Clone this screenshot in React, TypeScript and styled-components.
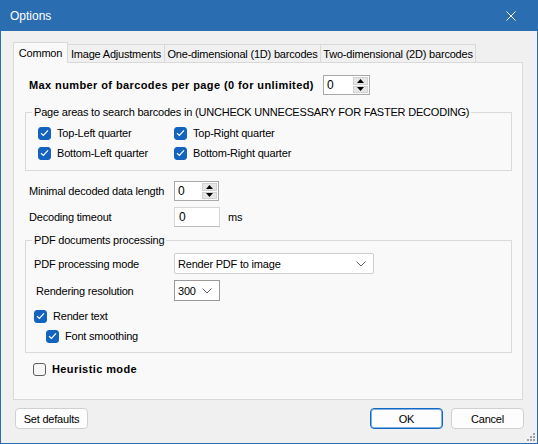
import React from "react"
import styled, { createGlobalStyle } from "styled-components"

const GlobalStyle = createGlobalStyle`
    html, body {
        margin: 0;
        padding: 0;
        background: #ffffff;
    }
    body {
        font-family: "Liberation Sans", Arial, sans-serif;
        font-size: 11px;
        letter-spacing: -0.2px;
        color: #000000;
    }
    * {
        box-sizing: border-box;
    }
`

const Check = () => (
    <svg width="9" height="8" viewBox="0 0 9 8">
        <path d="M1 4.2 L3.4 6.4 L8 1.4" fill="none" stroke="#ffffff" strokeWidth="1.2" />
    </svg>
)

const Chevron = () => (
    <svg width="10" height="6" viewBox="0 0 10 6">
        <path d="M0.5 0.5 L5 5 L9.5 0.5" fill="none" stroke="#606060" strokeWidth="1" />
    </svg>
)

const Arrow = ({ down }: { down?: boolean }) => (
    <svg width="7" height="4" viewBox="0 0 7 4">
        <path d={down ? "M0 0 L7 0 L3.5 4 Z" : "M0 4 L7 4 L3.5 0 Z"} fill="#000000" />
    </svg>
)

const Spin = ({ value, width }: { value: string; width: number }) => (
    <SpinBox style={{ width }}>
        <SpinText>{value}</SpinText>
        <SpinButtons>
            <SpinBtn><Arrow /></SpinBtn>
            <SpinBtn><Arrow down /></SpinBtn>
        </SpinButtons>
    </SpinBox>
)

const CheckBox = ({ label, checked, bold, indent }: { label: string; checked?: boolean; bold?: boolean; indent?: number }) => (
    <CheckRow $indent={indent ?? 0}>
        <Box $checked={!!checked}>{checked && <Check />}</Box>
        <CheckLabel $bold={!!bold}>{label}</CheckLabel>
    </CheckRow>
)

export default function App() {
    return (
        <>
            <GlobalStyle />
            <Window>
                <TitleBar>
                    <Title>Options</Title>
                    <CloseBtn>
                        <svg width="10" height="10" viewBox="0 0 10 10">
                            <path d="M0.5 0.5 L9.5 9.5 M9.5 0.5 L0.5 9.5" stroke="#ffffff" strokeWidth="1" />
                        </svg>
                    </CloseBtn>
                </TitleBar>
                <Body>
                    <Tabs>
                        <Tab $active $w={55}>Common</Tab>
                        <Tab $w={97}>Image Adjustments</Tab>
                        <Tab $w={156}>One-dimensional (1D) barcodes</Tab>
                        <Tab $w={155}>Two-dimensional (2D) barcodes</Tab>
                    </Tabs>
                    <Panel>
                        <FieldRow $top={12} $h={20} $pad={4}>
                            <FieldLabel $w={294} $bold>Max number of barcodes per page (0 for unlimited)</FieldLabel>
                            <Spin value="0" width={47} />
                        </FieldRow>

                        <Group $top={17}>
                            <Legend>Page areas to search barcodes in (UNCHECK UNNECESSARY FOR FASTER DECODING)</Legend>
                            <CheckGrid>
                                <CheckBox label="Top-Left quarter" checked />
                                <CheckBox label="Top-Right quarter" checked />
                                <CheckBox label="Bottom-Left quarter" checked />
                                <CheckBox label="Bottom-Right quarter" checked />
                            </CheckGrid>
                        </Group>

                        <FieldRow $top={10} $h={20} $pad={4}>
                            <FieldLabel $w={145}>Minimal decoded data length</FieldLabel>
                            <Spin value="0" width={45} />
                        </FieldRow>
                        <FieldRow $top={6} $h={20} $pad={4}>
                            <FieldLabel $w={145}>Decoding timeout</FieldLabel>
                            <TextBox>0</TextBox>
                            <Unit>ms</Unit>
                        </FieldRow>

                        <Group $top={13}>
                            <Legend>PDF documents processing</Legend>
                            <GroupBody>
                                <FieldRow $top={5} $h={21} $pad={8}>
                                    <FieldLabel $w={140}>PDF processing mode</FieldLabel>
                                    <Select $w={200} $dark={false}>
                                        <span>Render PDF to image</span>
                                        <Chevron />
                                    </Select>
                                </FieldRow>
                                <FieldRow $top={6} $h={21} $pad={10}>
                                    <FieldLabel $w={138}>Rendering resolution</FieldLabel>
                                    <Select $w={46} $dark>
                                        <span>300</span>
                                        <Chevron />
                                    </Select>
                                </FieldRow>
                                <CheckList>
                                    <CheckBox label="Render text" checked indent={8} />
                                    <CheckBox label="Font smoothing" checked indent={20} />
                                </CheckList>
                            </GroupBody>
                        </Group>

                        <HeuristicRow>
                            <CheckBox label="Heuristic mode" bold indent={8} />
                        </HeuristicRow>
                    </Panel>
                    <Footer>
                        <Button>Set defaults</Button>
                        <FooterRight>
                            <Button $primary>OK</Button>
                            <Button>Cancel</Button>
                        </FooterRight>
                    </Footer>
                </Body>
                <Grip>
                    <svg width="8" height="8" viewBox="0 0 8 8">
                        <rect x="6" y="0" width="2" height="2" fill="#a0a0a0" />
                        <rect x="3" y="3" width="2" height="2" fill="#a0a0a0" />
                        <rect x="6" y="3" width="2" height="2" fill="#a0a0a0" />
                        <rect x="0" y="6" width="2" height="2" fill="#a0a0a0" />
                        <rect x="3" y="6" width="2" height="2" fill="#a0a0a0" />
                        <rect x="6" y="6" width="2" height="2" fill="#a0a0a0" />
                    </svg>
                </Grip>
            </Window>
        </>
    )
}

const Window = styled.div`
    width: 538px;
    height: 444px;
    background: #2b6db1;
    padding: 0 1px 1px 1px;
    display: flex;
    flex-direction: column;
    position: relative;
`

const TitleBar = styled.div`
    height: 31px;
    flex: none;
    display: flex;
    align-items: center;
    justify-content: space-between;
    padding-left: 9px;
    color: #ffffff;
`

const Title = styled.div`
    font-size: 12px;
    letter-spacing: 0;
`

const CloseBtn = styled.div`
    width: 46px;
    height: 31px;
    display: flex;
    align-items: center;
    justify-content: center;
    padding-right: 6px;
`

const Body = styled.div`
    flex: 1;
    background: #f0f0f0;
    padding: 12px 14px 0 12px;
    display: flex;
    flex-direction: column;
`

const Tabs = styled.div`
    display: flex;
    align-items: flex-end;
    height: 20px;
    position: relative;
    z-index: 1;
    margin-bottom: -1px;
`

const Tab = styled.div<{ $active?: boolean; $w: number }>`
    width: ${p => p.$w}px;
    height: ${p => (p.$active ? 21 : 19)}px;
    background: ${p => (p.$active ? "#f9f9f9" : "#f0f0f0")};
    border: 1px solid #d9d9d9;
    border-bottom: ${p => (p.$active ? "none" : "1px solid #d9d9d9")};
    border-left: ${p => (p.$active ? "1px solid #d9d9d9" : "none")};
    display: flex;
    align-items: center;
    justify-content: center;
    padding-top: ${p => (p.$active ? 0 : 1)}px;
    white-space: nowrap;
`

const Panel = styled.div`
    height: 338px;
    background: #f9f9f9;
    border: 1px solid #d9d9d9;
    padding: 0 10px 0 11px;
    display: flex;
    flex-direction: column;
`

const FieldRow = styled.div<{ $top: number; $h: number; $pad: number }>`
    display: flex;
    align-items: center;
    height: ${p => p.$h}px;
    margin-top: ${p => p.$top}px;
    padding-left: ${p => p.$pad}px;
`

const FieldLabel = styled.div<{ $w: number; $bold?: boolean }>`
    width: ${p => p.$w}px;
    flex: none;
    font-weight: ${p => (p.$bold ? 700 : 400)};
    letter-spacing: ${p => (p.$bold ? 0.4 : -0.2)}px;
    white-space: nowrap;
`

const SpinBox = styled.div`
    height: 20px;
    background: #ffffff;
    border: 1px solid #a9a9a9;
    display: flex;
    align-items: stretch;
    padding: 1px;
`

const SpinText = styled.div`
    flex: 1;
    padding-left: 2px;
    line-height: 16px;
    font-size: 12px;
`

const SpinButtons = styled.div`
    width: 15px;
    display: flex;
    flex-direction: column;
    gap: 1px;
`

const SpinBtn = styled.div`
    flex: 1;
    background: #e6e6e6;
    border: 1px solid #d2d2d2;
    display: flex;
    align-items: center;
    justify-content: center;
`

const TextBox = styled.div`
    width: 46px;
    height: 20px;
    background: #ffffff;
    border: 1px solid #d6d6d6;
    border-bottom-color: #bcbcbc;
    padding-left: 4px;
    line-height: 18px;
    font-size: 12px;
`

const Unit = styled.span`
    margin-left: 8px;
`

const Group = styled.div<{ $top: number }>`
    margin-top: ${p => p.$top}px;
    border: 1px solid #dadada;
    display: flex;
    flex-direction: column;
`

const Legend = styled.div`
    margin: -9px 0 0 6px;
    padding: 0 2px;
    line-height: 16px;
    width: fit-content;
    background: #f9f9f9;
    white-space: nowrap;
`

const CheckGrid = styled.div`
    display: grid;
    grid-template-columns: 136px auto;
    grid-auto-rows: 20px;
    padding: 3px 0 7px 12px;
`

const GroupBody = styled.div`
    display: flex;
    flex-direction: column;
    padding-bottom: 6px;
`

const CheckList = styled.div`
    display: flex;
    flex-direction: column;
    margin-top: 5px;
`

const CheckRow = styled.label<{ $indent: number }>`
    display: flex;
    align-items: center;
    gap: 6px;
    height: 20px;
    padding-left: ${p => p.$indent}px;
    white-space: nowrap;
`

const Box = styled.span<{ $checked: boolean }>`
    width: 13px;
    height: 13px;
    flex: none;
    border-radius: 3px;
    background: ${p => (p.$checked ? "#1463bf" : "#f6f6f6")};
    border: 1px solid ${p => (p.$checked ? "#1463bf" : "#5f5f5f")};
    display: flex;
    align-items: center;
    justify-content: center;
`

const CheckLabel = styled.span<{ $bold: boolean }>`
    font-weight: ${p => (p.$bold ? 700 : 400)};
    letter-spacing: ${p => (p.$bold ? 0.4 : -0.2)}px;
`

const Select = styled.div<{ $w: number; $dark: boolean }>`
    width: ${p => p.$w}px;
    height: 21px;
    background: #ffffff;
    border: 1px solid ${p => (p.$dark ? "#9a9a9a" : "#cfcfcf")};
    border-radius: ${p => (p.$dark ? 0 : 2)}px;
    display: flex;
    align-items: center;
    justify-content: space-between;
    padding: 0 7px 0 3px;
`

const HeuristicRow = styled.div`
    margin-top: 6px;
`

const Footer = styled.div`
    display: flex;
    justify-content: space-between;
    margin-top: 8px;
    padding-left: 2px;
    margin-right: -1px;
`

const FooterRight = styled.div`
    display: flex;
    gap: 8px;
`

const Button = styled.div<{ $primary?: boolean }>`
    min-width: 73px;
    height: 21px;
    padding: 0 6px;
    background: #fdfdfd;
    border: 1px solid ${p => (p.$primary ? "#1266c4" : "#d0d0d0")};
    box-shadow: ${p => (p.$primary ? "inset 0 0 0 1px #7fb1e3" : "none")};
    border-radius: 4px;
    display: flex;
    align-items: center;
    justify-content: center;
`

const Grip = styled.div`
    position: absolute;
    right: 3px;
    bottom: 3px;
    width: 8px;
    height: 8px;
    display: flex;
`
